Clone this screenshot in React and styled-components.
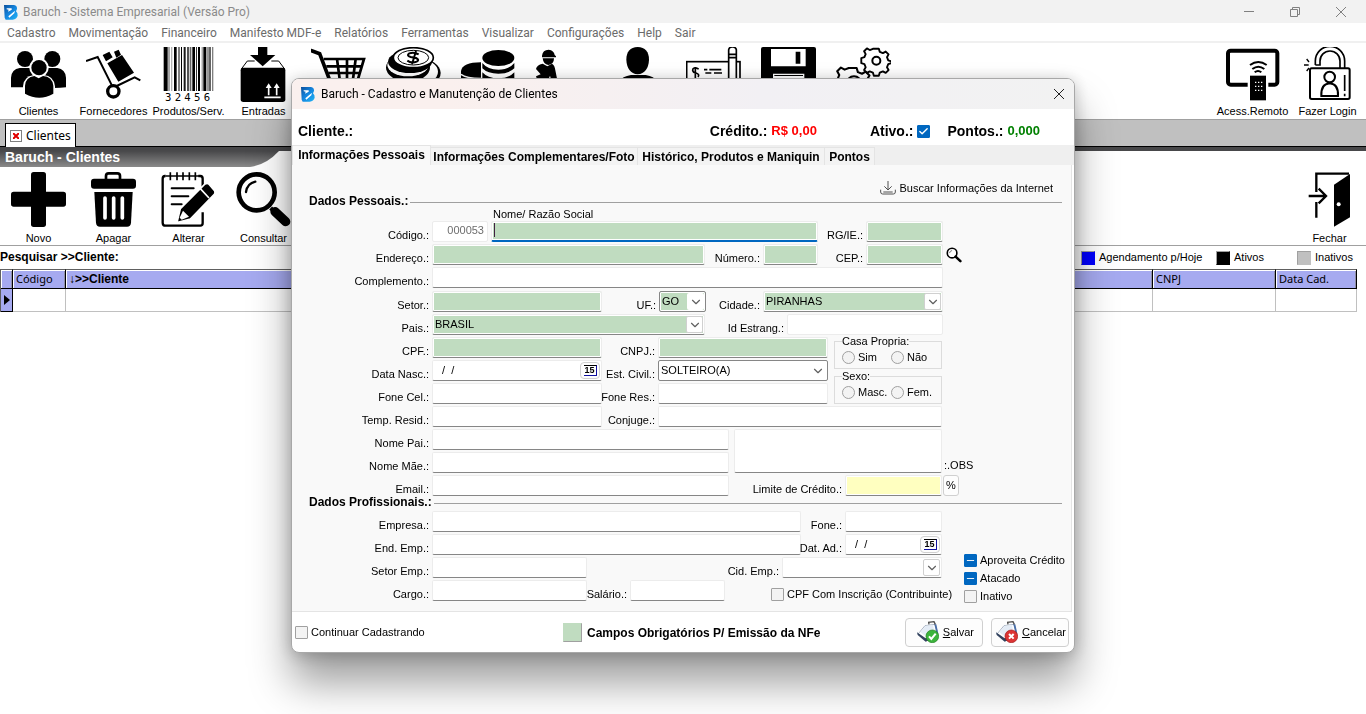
import React from "react";
import styled, { createGlobalStyle } from "styled-components";
import { ChevronDown, Check, Minus } from "lucide-react";

const GlobalStyle = createGlobalStyle`
  * {
    box-sizing: border-box;
  }

  body {
    margin: 0;
    background: #ffffff;
    color: #000000;
    font-family: "Liberation Sans", Arial, sans-serif;
    font-size: 11px;
    line-height: 13px;
    overflow: hidden;
  }

  button, input, select, textarea {
    font: inherit;
    color: inherit;
    margin: 0;
  }

  svg {
    display: block;
    flex: none;
  }
`;

/* ---------- main window ---------- */

const Window = styled.div`
  min-height: 100vh;
  display: flex;
  flex-direction: column;
`;

const TitleBar = styled.header`
  display: flex;
  align-items: center;
  gap: 4px;
  height: 23px;
  padding: 0 2px 0 3px;
  background: #f2f2f2;
  color: #8a8a8a;
  font: 12px/16px Roboto, "Open Sans", sans-serif;
`;

const WindowButtons = styled.div`
  display: flex;
  margin-left: auto;
`;

const WindowButton = styled.button`
  display: grid;
  place-items: center;
  width: ${props => props.$w || 46}px;
  height: 20px;
  padding: 0;
  border: 0;
  background: none;
`;

const MenuBar = styled.nav`
  display: flex;
  align-items: center;
  gap: 13px;
  height: 20px;
  padding: 2px 0 0 7px;
  border-bottom: 2px solid #f0f0f0;
`;

const MenuItem = styled.a`
  color: #6b6b6b;
  text-decoration: none;
  white-space: nowrap;
  font: 12px/16px Roboto, "Open Sans", sans-serif;
`;

const Toolbar = styled.div`
  display: flex;
  height: ${props => props.$h}px;
  padding: 4px 1px 0;
  border-bottom: 1px solid #a0a0a0;
`;

const ToolButton = styled.button`
  display: flex;
  flex-direction: column;
  align-items: center;
  gap: 3px;
  width: ${props => props.$w || 75}px;
  padding: 0;
  border: 0;
  background: none;
  white-space: nowrap;
`;

const PageToolbar = styled(Toolbar)`
  padding-top: 5px;

  ${ToolButton} {
    gap: 5px;
  }
`;

const ToolSpacer = styled.div`
  flex: 1;
`;

const PageTabs = styled.div`
  display: flex;
  align-items: flex-end;
  height: 27px;
  padding-left: 5px;
  background: #c0c0c0;
  border-bottom: 1px solid #000000;
`;

const PageTab = styled.button`
  display: flex;
  align-items: center;
  gap: 4px;
  width: 71px;
  height: 24px;
  margin-bottom: -1px;
  padding: 0 4px;
  border: 1px solid #000000;
  border-bottom: 0;
  background: #ffffff;
  font: 12px/16px "Noto Sans", sans-serif;
`;

const CloseMark = styled.span`
  display: grid;
  place-items: center;
  width: 12px;
  height: 12px;
  border: 1px solid #808080;
`;

const PageHeader = styled.div`
  display: flex;
  height: 20px;
  border-top: 4px solid #48484a;
`;

const PageTitle = styled.h1`
  width: 250px;
  height: 16px;
  margin: 0;
  padding-left: 5px;
  background: linear-gradient(#48484a, #8a8a8a);
  color: #ffffff;
  font-size: 14px;
  line-height: 12px;
`;

const SearchBar = styled.div`
  display: flex;
  align-items: center;
  height: 23px;
`;

const SearchTitle = styled.h2`
  flex: 1;
  margin: 0;
  font-size: 12px;
`;

const StatusKey = styled.span`
  display: flex;
  align-items: center;
  gap: 4px;
  width: ${props => props.$w}px;
  white-space: nowrap;
`;

const Swatch = styled.i`
  flex: none;
  width: ${props => props.$size}px;
  height: ${props => props.$size}px;
  border: 1px solid ${props => props.$color};
  border-${props => props.$sunk ? "right" : "left"}-color: #a0a0a0;
  border-${props => props.$sunk ? "bottom" : "top"}-color: #a0a0a0;
  background: ${props => props.$color};
`;

const Grid = styled.table`
  width: calc(100% - 9px);
  table-layout: fixed;
  border-collapse: separate;
  border-spacing: 0;
  border-left: 1px solid #606060;
`;

const HeadCell = styled.th`
  width: ${props => (props.$w ? `${props.$w}px` : "auto")};
  height: 20px;
  padding: 0 3px;
  border-top: 1px solid #606060;
  border-right: 1px solid #000000;
  border-bottom: 1px solid #000000;
  background: #a6aaf0;
  box-shadow: inset 1px 1px 0 #ffffff, inset -1px 0 0 #9090a8;
  text-align: left;
  font: ${props => (props.$sorted ? "bold 12px/14px" : "11px/14px")}
    ${props => (props.$sorted ? '"Liberation Sans"' : '"Noto Sans"')}, sans-serif;
`;

const Cell = styled.td`
  height: 23px;
  padding: 0 3px;
  border-right: 1px solid #c0c0c0;
  border-bottom: 1px solid #c0c0c0;
`;

const MarkerCell = styled(Cell)`
  background: #a6aaf0;
  border-color: #000000;
`;

/* ---------- dialog ---------- */

const Overlay = styled.div`
  position: fixed;
  inset: 0;
  display: flex;
  justify-content: center;
  align-items: flex-start;
  padding-top: 78px;
`;

const Dialog = styled.section`
  width: 784px;
  border: 1px solid #a8a8a8;
  border-radius: 8px;
  background: #ffffff;
  box-shadow: 0 30px 42px rgba(0, 0, 0, 0.38), 0 2px 16px rgba(0, 0, 0, 0.22);
  overflow: hidden;
`;

const DialogTitle = styled.div`
  display: flex;
  align-items: center;
  gap: 5px;
  height: 30px;
  padding-left: 8px;
  background: linear-gradient(90deg, #faf0ee 20%, #f2f0f4 60%, #f2f2f2);
  font: 12px/16px Roboto, "Open Sans", sans-serif;
`;

const Summary = styled.div`
  display: flex;
  align-items: center;
  height: 36px;
  padding: 8px 34px 0 6px;
  font-size: 14px;
  line-height: 16px;
  font-weight: bold;
`;

const SummaryItem = styled.div`
  display: flex;
  align-items: center;
  gap: 4px;
  margin-left: ${props => props.$gap || 0}px;
`;

const Amount = styled.output`
  color: ${props => props.$color};
  font-size: 13px;
`;

const Tabs = styled.div`
  display: flex;
  align-items: flex-end;
  height: 20px;
  background: #efefef;
`;

const Tab = styled.button`
  width: ${props => props.$w}px;
  height: ${props => (props.$active ? 20 : 18)}px;
  padding: 0 0 ${props => (props.$active ? 2 : 0)}px;
  border: 1px solid #e4e4e4;
  border-bottom: 0;
  border-left-width: ${props => (props.$active ? 1 : 0)}px;
  background: ${props => (props.$active ? "#f9f9f9" : "#f3f3f3")};
  font-size: 12px;
  line-height: 14px;
  font-weight: bold;
  white-space: nowrap;
`;

const Panel = styled.form`
  margin-right: 2px;
  padding: 16px 0 8px;
  background: #f9f9f9;
  border-right: 1px solid #e4e4e4;
  border-bottom: 1px solid #e4e4e4;
`;

const LinkRow = styled.div`
  display: flex;
  justify-content: flex-end;
  height: 14px;
  padding-right: 18px;
`;

const LinkButton = styled.button`
  display: flex;
  align-items: center;
  gap: 4px;
  height: 14px;
  padding: 0;
  border: 0;
  background: none;
`;

const SectionTitle = styled.h3`
  display: flex;
  align-items: center;
  gap: 2px;
  margin: 0;
  padding: 0 9px 0 17px;
  font-size: 12px;
  line-height: 13px;

  &::after {
    content: "";
    flex: 1;
    height: 1px;
    margin-top: 2px;
    background: #a0a0a0;
  }
`;

const Caption = styled.label`
  display: block;
  padding-left: 201px;
`;

const Stack = styled.div`
  display: flex;
  flex-direction: column;
  gap: ${props => props.$gap || 2}px;
`;

const Columns = styled.div`
  display: flex;
`;

const Row = styled.div`
  display: flex;
  align-items: flex-end;
  height: 21px;
`;

const Label = styled.label`
  display: flex;
  justify-content: flex-end;
  flex: none;
  width: ${props => props.$w}px;
  padding-right: 3px;
  white-space: nowrap;
`;

const fills = { green: "#c0dcc0", yellow: "#ffffc0", white: "#ffffff" };

const Input = styled.input`
  flex: none;
  width: ${props => props.$w}px;
  height: 21px;
  padding: 0 3px 3px;
  border: 1px solid #ececec;
  border-bottom-color: ${props => (props.$flat ? "#ececec" : "#868686")};
  border-radius: 2px;
  outline: 0;
  background: ${props => fills[props.$fill || "white"]};
  box-shadow: inset 0 0 0 1px #ffffff;
  text-align: ${props => props.$align || "left"};
  color: ${props => (props.disabled ? "#6d6d6d" : "#000000")};
`;

const ActiveInput = styled(Input)`
  margin-left: 3px;
  border-bottom: 2px solid #0067c0;
  background: linear-gradient(#402040, #402040) 2px 1px / 1px 14px no-repeat #c0dcc0;
`;

const Notes = styled.textarea`
  width: 208px;
  height: 44px;
  margin-left: 5px;
  border: 1px solid #ececec;
  border-bottom-color: #868686;
  border-radius: 2px;
  resize: none;
`;

const NotesLabel = styled.label`
  align-self: flex-end;
  padding: 0 0 1px 2px;
`;

const SelectBox = styled.span`
  display: grid;
  flex: none;
  align-items: center;
  width: ${props => props.$w}px;
  height: 21px;
  border: 1px solid ${props => (props.$framed ? "#868686" : "#ececec")};
  border-bottom-color: #868686;
  border-radius: 2px;
  background: ${props => fills[props.$fill || "white"]};
  box-shadow: inset 0 0 0 1px #ffffff;

  & > * {
    grid-area: 1 / 1;
  }
`;

const Select = styled.select`
  width: 100%;
  height: 19px;
  padding: 0 24px 1px 2px;
  border: 0;
  outline: 0;
  appearance: none;
  background: none;
`;

const Arrow = styled.span`
  display: grid;
  place-items: center;
  justify-self: end;
  width: 17px;
  height: 17px;
  margin-right: 1px;
  border: ${props => (props.$boxed ? "1px solid #d0d0d0" : "0")};
  border-radius: 2px;
  background: #ffffff;
  color: #606060;
  pointer-events: none;
`;

const DateBox = styled.span`
  display: flex;
  align-items: center;
  flex: none;
  width: ${props => props.$w}px;
  height: 21px;
  padding-right: 1px;
  border: 1px solid #ececec;
  border-bottom-color: #868686;
  border-radius: 2px;
  background: #ffffff;
`;

const DateInput = styled.input`
  flex: 1;
  min-width: 0;
  height: 19px;
  padding: 0 0 2px 9px;
  border: 0;
  outline: 0;
  background: none;
  white-space: pre;
`;

const CalendarButton = styled.button`
  display: grid;
  place-items: center;
  width: 20px;
  height: 17px;
  padding: 0;
  border: 1px solid #d0d0d0;
  border-radius: 4px;
  background: #fdfdfd;
`;

const CalendarDay = styled.span`
  width: 13px;
  height: 11px;
  border-top: 1px solid #000000;
  border-right: 1px solid #1010a0;
  border-bottom: 1px solid #1010a0;
  font: bold 9px/9px "Liberation Sans", sans-serif;
`;

const CheckLabel = styled.label`
  display: flex;
  align-items: center;
  flex: none;
  gap: 3px;
  margin-left: ${props => props.$indent || 0}px;
  width: ${props => (props.$w ? `${props.$w}px` : "auto")};
  height: 13px;
  white-space: nowrap;
`;

const CheckBox = styled.span`
  display: inline-grid;
  place-items: center;
  flex: none;
  width: 13px;
  height: 13px;
  color: #ffffff;

  & > * {
    grid-area: 1 / 1;
  }

  svg {
    pointer-events: none;
  }
`;

const Box = styled.input`
  width: 13px;
  height: 13px;
  appearance: none;
  border: 1px solid ${props => (props.$on ? "#0067c0" : "#a0a0a0")};
  border-radius: 1px;
  background: ${props => (props.$on ? "#0067c0" : "#f3f3f3")};
`;

const Radio = styled.input`
  width: 13px;
  height: 13px;
  appearance: none;
  border: 1px solid #a0a0a0;
  border-radius: 50%;
  background: #f3f3f3;
`;

const Options = styled.div`
  display: flex;
  flex-direction: column;
  gap: 1px;
  width: 108px;
  margin: -2px 0 0 6px;
`;

const OptionGroup = styled.fieldset`
  display: flex;
  min-width: 0;
  height: 34px;
  margin: 0;
  padding: 3px 0 0 7px;
  border: 1px solid #dcdcdc;
`;

const Legend = styled.legend`
  padding: 0;
`;

const PercentButton = styled.button`
  width: 16px;
  height: 21px;
  margin-left: 1px;
  padding: 0;
  border: 1px solid #d0d0d0;
  border-radius: 3px;
  background: #fdfdfd;
`;

const LookupButton = styled.button`
  height: 21px;
  margin-left: 3px;
  padding: 0;
  border: 0;
  background: none;
`;

const Flags = styled.div`
  display: flex;
  flex-direction: column;
  gap: 5px;
  margin-left: 21px;
  padding-top: 43px;
`;

const Footer = styled.footer`
  display: flex;
  align-items: center;
  height: 40px;
  padding: 0 5px 0 3px;
`;

const Required = styled.strong`
  margin-left: 5px;
  padding-top: 3px;
  font-size: 12px;
`;

const Actions = styled.div`
  display: flex;
  gap: 8px;
  margin-left: auto;
`;

const ActionButton = styled.button`
  display: flex;
  align-items: center;
  justify-content: flex-end;
  gap: 4px;
  width: 78px;
  height: 29px;
  padding: 0 ${props => props.$pad}px 0 0;
  border: 1px solid #d0d0d0;
  border-radius: 4px;
  background: #fdfdfd;
`;

/* ---------- drawings ---------- */

const Icon = ({ children }) => (
  <svg width="55" height="55" viewBox="0 0 165 165" aria-hidden="true">
    {children}
  </svg>
);

const Line = props => <path fill="none" stroke="#000" {...props} />;

const Logo = () => (
  <svg width="16" height="16" viewBox="0 0 48 48" aria-hidden="true">
    <defs>
      <linearGradient id="logo" x1="0" y1="0" x2="1" y2="1">
        <stop offset="0" stopColor="#0b4f9c" />
        <stop offset="0.5" stopColor="#1487e0" />
        <stop offset="1" stopColor="#22b4f4" />
      </linearGradient>
    </defs>
    <path fill="url(#logo)" d="M3 3h30q10 2 9 12l-3 7q6 5 5 13-3 10-15 12H8L5 41z" />
    <path fill="#fff" d="M11 13h14q4 2 0 5l-10 5 2-6-6-1zM16 37l20-17-2 8-15 13z" />
  </svg>
);

const ClientsIcon = () => (
  <Icon>
    <circle cx="42" cy="36" r="24" />
    <circle cx="124" cy="36" r="24" />
    <path d="M0 121V92q2-26 26-29h30q20 2 26 20v38zM165 121V92q-2-26-26-29h-30q-20 2-26 20v38q50 4 82 0z" />
    <circle cx="84" cy="62" r="29" fill="#fff" />
    <path fill="#fff" d="M36 152v-34q2-30 32-34h30q30 2 34 34v34z" />
    <circle cx="84" cy="62" r="23" />
    <path d="M42 140v-24q2-26 28-29l13 7 13-7q28 2 31 29v24q-42 24-85 0z" />
  </Icon>
);

const SuppliersIcon = () => (
  <Icon>
    <Line d="M0 42l35-12 43 86M92 117l54-26 17 9" strokeWidth="6" />
    <circle cx="82" cy="133" r="17" fill="#fff" stroke="#000" strokeWidth="10" />
    <path d="M64 49l44-25 36 53-47 27zM50 24l20-10 10 17-20 12zM84 14l14-6 7 15-14 9z" />
  </Icon>
);

const bars = [
  [0, 12, 1], [14, 4, 0.5], [22, 4, 0.3], [31, 8, 1], [43, 6, 0.5], [52, 3, 1], [60, 6, 0.9],
  [71, 4, 1], [78, 5, 0.6], [86, 8, 1], [97, 3, 0.8], [103, 6, 1], [114, 3, 0.5], [119, 9, 1],
  [131, 4, 0.6], [137, 4, 0.9], [145, 4, 0.5]
];

const BarcodeIcon = () => (
  <Icon>
    {bars.map(([x, width, opacity]) => (
      <rect key={x} x={x + 8} y="0" width={width} height="132" opacity={opacity} />
    ))}
    <text
      x="12 41 70 99 128"
      y="161"
      fontFamily="DejaVu Sans Mono, monospace"
      fontSize="32"
    >
      32456
    </text>
  </Icon>
);

const InboundIcon = () => (
  <Icon>
    <path d="M66 0h28v24h24L80 58 42 24h24z" />
    <Line d="M16 66l18-24h22M146 66l-18-24h-22" strokeWidth="3" />
    <rect x="14" y="62" width="134" height="103" rx="8" />
    <Line stroke="#fff" strokeWidth="5" d="M98 145v-28M122 145v-28M85 151h49" />
    <path fill="#fff" d="M89 123l9-14 9 14zM113 123l9-14 9 14z" />
  </Icon>
);

const CartIcon = () => (
  <Icon>
    <Line d="M2 11l24 9 34 90" strokeWidth="11" strokeLinecap="round" />
    <Line d="M38 36h121l-18 60M46 58h104M52 78h94M78 36l8 60M108 36v60M134 36l-8 60" strokeWidth="8" />
  </Icon>
);

const CoinsIcon = () => (
  <Icon>
    <ellipse cx="100" cy="78" rx="64" ry="44" />
    <ellipse cx="98" cy="74" rx="58" ry="38" fill="#fff" />
    <ellipse cx="66" cy="62" rx="66" ry="42" />
    <ellipse cx="66" cy="54" rx="62" ry="34" fill="#fff" />
    <ellipse cx="72" cy="44" rx="66" ry="34" />
    <ellipse cx="82" cy="32" rx="60" ry="30" fill="#fff" stroke="#000" strokeWidth="5" />
    <ellipse cx="82" cy="32" rx="46" ry="22" fill="#fff" stroke="#000" strokeWidth="3" />
    <Line d="M98 22q-14-8-28-3-10 7 4 11l16 3q12 6 2 11-16 6-28-3M90 12l-12 40" strokeWidth="6" />
  </Icon>
);

const StackIcon = () => (
  <Icon>
    <path d="M0 96V72q4-26 60-26v50z" />
    <path fill="none" stroke="#fff" strokeWidth="4" d="M0 82q16 12 60 12" />
    <ellipse cx="112" cy="33" rx="48" ry="24" />
    <path d="M64 48q16 20 48 20t48-20v16q-16 16-48 16T64 64zM64 76q16 18 48 18t48-18v24H64z" />
  </Icon>
);

const WorkerIcon = () => (
  <Icon>
    <path d="M18 26q2-18 20-18 16 2 18 16l4 4v3H18zM20 34h34q0 18-17 20-15-2-17-20z" />
    <path d="M0 66q2-12 20-16l14 8 14-8q8 4 10 20l6 30H46l-4-14-6 14H4L0 88l14-6z" />
  </Icon>
);

const PersonIcon = () => (
  <Icon>
    <path d="M80 0q34 2 34 38-2 40-34 44-32-4-34-44Q46 2 80 0z" />
    <path d="M24 104q10-16 36-20h44q26 4 34 20z" />
  </Icon>
);

const CheckIcon = () => (
  <Icon>
    <rect x="2" y="44" width="160" height="70" fill="#fff" stroke="#000" strokeWidth="5" />
    <Line d="M38 66q-18-8-18 4 2 8 10 8 12 4 6 12M28 60v36M54 68h10M70 68h36M58 78h18M84 78h24" strokeWidth="5" />
    <path fill="#fff" stroke="#000" strokeWidth="5" d="M128 98V8q2-8 10-8h4q8 2 9 8v90M128 22h23M128 32h23" />
  </Icon>
);

const FloppyIcon = () => (
  <Icon>
    <path d="M0 6q0-6 6-6h153q6 0 6 6v104H0z" />
    <path fill="#fff" d="M30 6h104v52H30zM36 80h94v20H36z" />
    <path d="M104 14h14v36h-14zM40 84h86v3H40z" />
  </Icon>
);

const gear =
  "M-8-38h16l3 10 10 4 9-5 9 9-5 9 4 10 10 3V8l-10 3-4 10 5 9-9 9-9-5-10 4-3 10H-8l-3-10-10-4-9 5-9-9 5-9-4-10-10-3V-8l10-3 4-10-5-9 9-9 9 5 10-4z";

const GearsIcon = () => (
  <Icon>
    <g fill="none" stroke="#000" strokeWidth="6" strokeLinejoin="round">
      <path transform="translate(121 41) scale(.94)" d={gear} />
      <circle cx="121" cy="41" r="12" />
      <path transform="translate(52 110) scale(1.24)" d={gear} strokeWidth="5" />
      <circle cx="54" cy="110" r="22" />
    </g>
  </Icon>
);

const RemoteIcon = () => (
  <Icon>
    <rect x="9" y="11" width="148" height="102" rx="8" fill="none" stroke="#000" strokeWidth="12" />
    <rect x="68" y="82" width="62" height="83" fill="#fff" />
    <rect x="75" y="86" width="48" height="74" />
    <Line d="M75 54q25-18 50 0M82 66q18-14 36 0M89 76q10-8 20 0" strokeWidth="6" />
    <path
      stroke="#fff"
      strokeWidth="4"
      strokeDasharray="4 8"
      d="M92 104v32M101 104v32M110 104v32"
    />
  </Icon>
);

const LoginIcon = () => (
  <Icon>
    <g fill="none" stroke="#000" strokeWidth="6">
      <rect x="30" y="64" width="119" height="92" rx="5" />
      <path d="M46 54V42a43 43 0 0 1 88 0v22M46 54h14V42a29 29 0 0 1 60 0v22M134 84v48M134 140v8" strokeWidth="5" />
      <circle cx="89" cy="90" r="16" />
      <path d="M64 147q-2-36 25-38 27 2 25 38z" />
      <path d="M12 54h14M20 36l7 9M20 72l7-9" strokeWidth="4" />
    </g>
  </Icon>
);

const PlusIcon = () => (
  <Icon>
    <rect x="0" y="59" width="165" height="45" rx="8" />
    <rect x="60" y="0" width="45" height="165" rx="8" />
  </Icon>
);

const TrashIcon = () => (
  <Icon>
    <Line d="M60 22V12q0-8 8-8h26q8 0 8 8v10" strokeWidth="8" />
    <rect x="15" y="20" width="135" height="30" rx="9" />
    <path d="M25 60h115l-5 92q-1 12-12 12H42q-11 0-12-12z" />
    <path stroke="#fff" strokeWidth="11" strokeLinecap="round" d="M57 78v60M83 78v60M109 78v60" />
  </Icon>
);

const EditIcon = () => (
  <Icon>
    <Line d="M14 12h-2q-7 0-7 8v132q0 9 9 9h104q7 0 7-8v-32M112 12h6q7 0 7 8v24" strokeWidth="7" />
    <Line d="M14 12h100M28 1v24M48 1v24M66 1v24M85 1v24M103 1v24" strokeWidth="5" />
    <Line d="M32 49h66M32 73h50M32 97h30" strokeWidth="6" strokeLinecap="round" />
    <path stroke="#fff" strokeWidth="5" d="M48 152l10-42 74-74q8-4 12 1l16 18q4 6 0 12l-72 74z" />
    <path stroke="#fff" strokeWidth="5" d="M118 50l26 28" />
    <path fill="#fff" d="M66 116l18 18-22 9-6-6z" />
  </Icon>
);

const SearchIcon = () => (
  <Icon>
    <circle cx="62" cy="61" r="54" fill="none" stroke="#000" strokeWidth="14" />
    <Line d="M104 108l10 10" strokeWidth="12" />
    <Line d="M117 119l32 30" strokeWidth="28" strokeLinecap="round" />
    <Line d="M30 60q4-26 28-31" strokeWidth="7" strokeLinecap="round" />
  </Icon>
);

const DoorIcon = () => (
  <Icon>
    <Line d="M43 60V5h98M43 90v47" strokeWidth="7" />
    <path d="M96 38l48-32v130l-48 28z" />
    <circle cx="110" cy="97" r="6" fill="#fff" />
    <Line d="M20 72h50M50 50l22 22-22 22" strokeWidth="7" />
  </Icon>
);

const DownloadIcon = () => (
  <svg width="16" height="14" viewBox="0 0 48 42" fill="none" stroke="#505050" strokeWidth="4" aria-hidden="true">
    <path d="M24 0v26M13 16l11 11 11-11M2 26v7q0 6 6 6h32q6 0 6-6v-7M10 33h28" strokeWidth="3" />
  </svg>
);

const LookupIcon = () => (
  <svg width="16" height="16" viewBox="0 0 50 50" aria-hidden="true">
    <circle cx="19" cy="19" r="15" fill="#fff" stroke="#000" strokeWidth="5" />
    <path d="M30 30l15 14" stroke="#000" strokeWidth="8" strokeLinecap="round" />
    <path d="M11 19q1-7 8-8" fill="none" stroke="#707070" strokeWidth="3" />
  </svg>
);

const DiskIcon = ({ ok }) => (
  <svg width="22" height="22" viewBox="0 0 66 66" aria-hidden="true">
    <path fill="#fff" stroke="#8090a8" strokeWidth="2" d="M24 14l30-4 8 26-38 18L4 38z" />
    <path fill="#33435f" d="M0 34l26 18 36-16v10L26 62 2 42z" />
    <path fill="#4a6ea8" d="M52 10l6 0 6 28-5 2z" />
    <path fill="#e4ecf6" d="M10 34l16-20 22-2 4 20-26 14z" />
    <path fill="none" stroke="#505050" strokeWidth="4" d="M36 10l-1-6 16-2 4 8" />
    <circle cx="46" cy="46" r="19" fill={ok ? "#3cb43c" : "#dc3434"} stroke={ok ? "#1f7f1f" : "#a01818"} strokeWidth="2" />
    <path
      fill="none"
      stroke="#fff"
      strokeWidth="6"
      d={ok ? "M36 46l7 8 13-16" : "M39 39l14 14M53 39L39 53"}
    />
  </svg>
);

const CrossIcon = ({ size, color }) => (
  <svg width={size} height={size} viewBox="0 0 10 10" aria-hidden="true">
    <path d="M0 0l10 10M10 0L0 10" stroke={color} strokeWidth="1" />
  </svg>
);

const CurveEdge = () => (
  <svg width="31" height="16" viewBox="0 0 31 16" aria-hidden="true">
    <defs>
      <linearGradient id="edge" x1="0" y1="0" x2="0" y2="1">
        <stop offset="0" stopColor="#48484a" />
        <stop offset="1" stopColor="#8a8a8a" />
      </linearGradient>
    </defs>
    <path fill="url(#edge)" d="M0 0h29Q16 14 0 16z" />
  </svg>
);

/* ---------- form parts ---------- */

const Field = ({ id, label, labelWidth = 140, width, ...rest }) => (
  <>
    <Label htmlFor={id} $w={labelWidth}>{label}</Label>
    <Input id={id} $w={width} {...rest} />
  </>
);

const SelectField = ({ id, label, labelWidth = 140, width, value, fill, framed }) => (
  <>
    <Label htmlFor={id} $w={labelWidth}>{label}</Label>
    <SelectBox $w={width} $fill={fill} $framed={framed}>
      <Select id={id} defaultValue={value}>
        <option>{value}</option>
      </Select>
      <Arrow $boxed={!framed}>
        <ChevronDown size={14} strokeWidth={2} />
      </Arrow>
    </SelectBox>
  </>
);

const DateField = ({ id, label, labelWidth = 140, width }) => (
  <>
    <Label htmlFor={id} $w={labelWidth}>{label}</Label>
    <DateBox $w={width}>
      <DateInput id={id} defaultValue="/  /" />
      <CalendarButton type="button">
        <CalendarDay>15</CalendarDay>
      </CalendarButton>
    </DateBox>
  </>
);

const CheckField = ({ label, state, ...rest }) => (
  <CheckLabel {...rest}>
    <CheckBox>
      <Box type="checkbox" defaultChecked={!!state} $on={!!state} />
      {state === "mixed" && <Minus size={11} strokeWidth={2} />}
    </CheckBox>
    {label}
  </CheckLabel>
);

const RadioField = ({ name, label, width }) => (
  <CheckLabel $w={width}>
    <Radio type="radio" name={name} />
    {label}
  </CheckLabel>
);

const Tool = ({ icon: Drawing, label, name, width }) => (
  <ToolButton type="button" aria-label={label || name} $w={width}>
    <Drawing />
    {label}
  </ToolButton>
);

const menus = [
  "Cadastro", "Movimentação", "Financeiro", "Manifesto MDF-e", "Relatórios",
  "Ferramentas", "Visualizar", "Configurações", "Help", "Sair"
];

const MainWindow = () => (
  <Window>
    <TitleBar>
      <Logo />
      Baruch - Sistema Empresarial (Versão Pro)
      <WindowButtons>
        <WindowButton aria-label="Minimizar">
          <svg width="10" height="10" viewBox="0 0 10 10"><path d="M0 4.500h10" stroke="#808080" /></svg>
        </WindowButton>
        <WindowButton aria-label="Restaurar">
          <svg width="10" height="10" viewBox="0 0 10 10" fill="none" stroke="#808080">
            <path d="M.5 2.500h7v7h-7zM2.500 2V.5h7v7H8" />
          </svg>
        </WindowButton>
        <WindowButton aria-label="Fechar janela">
          <CrossIcon size={10} color="#808080" />
        </WindowButton>
      </WindowButtons>
    </TitleBar>
    <MenuBar>
      {menus.map(item => (
        <MenuItem key={item} href="#">{item}</MenuItem>
      ))}
    </MenuBar>
    <Toolbar $h={77}>
      <Tool icon={ClientsIcon} label="Clientes" />
      <Tool icon={SuppliersIcon} label="Fornecedores" />
      <Tool icon={BarcodeIcon} label="Produtos/Serv." />
      <Tool icon={InboundIcon} label="Entradas" />
      <Tool icon={CartIcon} name="Vendas" />
      <Tool icon={CoinsIcon} name="Receber" />
      <Tool icon={StackIcon} name="Pagar" />
      <Tool icon={WorkerIcon} name="Serviços" />
      <Tool icon={PersonIcon} name="Funcionários" />
      <Tool icon={CheckIcon} name="Cheques" />
      <Tool icon={FloppyIcon} name="Backup" />
      <Tool icon={GearsIcon} name="Configurar" />
      <ToolSpacer />
      <Tool icon={RemoteIcon} label="Acess.Remoto" />
      <Tool icon={LoginIcon} label="Fazer Login" />
    </Toolbar>
    <PageTabs>
      <PageTab type="button">
        <CloseMark>
          <svg width="6" height="6" viewBox="0 0 6 6">
            <path d="M0 0l6 6M6 0L0 6" stroke="#e00000" strokeWidth="2" />
          </svg>
        </CloseMark>
        Clientes
      </PageTab>
    </PageTabs>
    <PageHeader>
      <PageTitle>Baruch - Clientes</PageTitle>
      <CurveEdge />
    </PageHeader>
    <PageToolbar $h={79}>
      <Tool icon={PlusIcon} label="Novo" />
      <Tool icon={TrashIcon} label="Apagar" />
      <Tool icon={EditIcon} label="Alterar" />
      <Tool icon={SearchIcon} label="Consultar" />
      <ToolSpacer />
      <Tool icon={DoorIcon} label="Fechar" width={71} />
    </PageToolbar>
    <SearchBar>
      <SearchTitle>Pesquisar &gt;&gt;Cliente:</SearchTitle>
      <StatusKey $w={135}><Swatch $size={14} $color="#0000ff" />Agendamento p/Hoje</StatusKey>
      <StatusKey $w={81}><Swatch $size={14} $color="#000000" />Ativos</StatusKey>
      <StatusKey $w={69}><Swatch $size={14} $color="#c0c0c0" />Inativos</StatusKey>
    </SearchBar>
    <Grid>
      <thead>
        <tr>
          <HeadCell $w={12} />
          <HeadCell $w={53}>Código</HeadCell>
          <HeadCell $sorted>↓&gt;&gt;Cliente</HeadCell>
          <HeadCell $w={123}>CNPJ</HeadCell>
          <HeadCell $w={81}>Data Cad.</HeadCell>
        </tr>
      </thead>
      <tbody>
        <tr>
          <MarkerCell>
            <svg width="6" height="10" viewBox="0 0 6 10"><path d="M0 0l6 5-6 5z" /></svg>
          </MarkerCell>
          <Cell />
          <Cell />
          <Cell />
          <Cell />
        </tr>
      </tbody>
    </Grid>
  </Window>
);

const PersonalData = () => (
  <>
    <SectionTitle>Dados Pessoais.:</SectionTitle>
    <Caption htmlFor="nome">Nome/ Razão Social</Caption>
    <Stack $gap={3}>
      <Stack>
        <Row>
          <Field id="codigo" label="Código.:" width={56} defaultValue="000053" $align="right" $flat disabled />
          <ActiveInput id="nome" $w={327} />
          <Field id="rg" label="RG/IE.:" labelWidth={48} width={77} $fill="green" />
        </Row>
        <Row>
          <Field id="endereco" label="Endereço.:" width={273} $fill="green" />
          <Field id="numero" label="Número.:" labelWidth={58} width={55} $fill="green" />
          <Field id="cep" label="CEP.:" labelWidth={48} width={77} $fill="green" />
          <LookupButton type="button" aria-label="Buscar CEP"><LookupIcon /></LookupButton>
        </Row>
        <Row>
          <Field id="complemento" label="Complemento.:" width={511} />
        </Row>
      </Stack>
      <Stack>
        <Row>
          <Field id="setor" label="Setor.:" width={170} $fill="green" />
          <SelectField id="uf" label="UF.:" labelWidth={57} width={47} value="GO" fill="green" framed />
          <SelectField id="cidade" label="Cidade.:" labelWidth={57} width={180} value="PIRANHAS" fill="green" />
        </Row>
        <Row>
          <SelectField id="pais" label="Pais.:" width={273} value="BRASIL" fill="green" />
          <Field id="estrang" label="Id Estrang.:" labelWidth={82} width={156} $flat />
        </Row>
        <Columns>
          <Stack>
            <Row>
              <Field id="cpf" label="CPF.:" width={170} $fill="green" />
              <Field id="cnpj" label="CNPJ.:" labelWidth={56} width={170} $fill="green" />
            </Row>
            <Row>
              <DateField id="nasc" label="Data Nasc.:" width={170} />
              <SelectField id="civil" label="Est. Civil.:" labelWidth={56} width={170} value="SOLTEIRO(A)" framed />
            </Row>
            <Row>
              <Field id="celular" label="Fone Cel.:" width={170} />
              <Field id="residencial" label="Fone Res.:" labelWidth={56} width={170} />
            </Row>
          </Stack>
          <Options>
            <OptionGroup>
              <Legend>Casa Propria:</Legend>
              <RadioField name="casa" label="Sim" width={49} />
              <RadioField name="casa" label="Não" />
            </OptionGroup>
            <OptionGroup>
              <Legend>Sexo:</Legend>
              <RadioField name="sexo" label="Masc." width={49} />
              <RadioField name="sexo" label="Fem." />
            </OptionGroup>
          </Options>
        </Columns>
        <Row>
          <Field id="tempo" label="Temp. Resid.:" width={170} />
          <Field id="conjuge" label="Conjuge.:" labelWidth={56} width={284} />
        </Row>
        <Columns>
          <Stack>
            <Row>
              <Field id="pai" label="Nome Pai.:" width={297} />
            </Row>
            <Row>
              <Field id="mae" label="Nome Mãe.:" width={297} />
            </Row>
          </Stack>
          <Notes id="obs" />
          <NotesLabel htmlFor="obs">:.OBS</NotesLabel>
        </Columns>
        <Row>
          <Field id="email" label="Email.:" width={297} />
          <Field id="limite" label="Limite de Crédito.:" labelWidth={116} width={97} $fill="yellow" />
          <PercentButton type="button">%</PercentButton>
        </Row>
      </Stack>
    </Stack>
  </>
);

const WorkData = () => (
  <Stack>
    <SectionTitle>Dados Profissionais.:</SectionTitle>
    <Columns>
      <Stack>
        <Row>
          <Field id="empresa" label="Empresa.:" width={369} />
          <Field id="fone" label="Fone.:" labelWidth={44} width={97} />
        </Row>
        <Row>
          <Field id="endEmp" label="End. Emp.:" width={369} />
          <DateField id="admissao" label="Dat. Ad.:" labelWidth={44} width={97} />
        </Row>
        <Row>
          <Field id="setorEmp" label="Setor Emp.:" width={155} />
          <SelectField id="cidEmp" label="Cid. Emp.:" labelWidth={195} width={160} value="" />
        </Row>
        <Row>
          <Field id="cargo" label="Cargo.:" width={155} />
          <Field id="salario" label="Salário.:" labelWidth={43} width={95} />
          <CheckField label="CPF Com Inscrição (Contribuinte)" $indent={46} $w={172} />
        </Row>
      </Stack>
      <Flags>
        <CheckField label="Aproveita Crédito" state="mixed" />
        <CheckField label="Atacado" state="mixed" />
        <CheckField label="Inativo" />
      </Flags>
    </Columns>
  </Stack>
);

const ClientDialog = () => (
  <Overlay>
    <Dialog role="dialog">
      <DialogTitle>
        <Logo />
        Baruch - Cadastro e Manutenção de Clientes
        <WindowButtons>
          <WindowButton $w={30} aria-label="Fechar cadastro">
            <CrossIcon size={10} color="#202020" />
          </WindowButton>
        </WindowButtons>
      </DialogTitle>
      <Summary>
        Cliente.:
        <ToolSpacer />
        <SummaryItem>
          Crédito.: <Amount $color="#ff0000">R$ 0,00</Amount>
        </SummaryItem>
        <SummaryItem $gap={53}>
          <label htmlFor="ativo">Ativo.:</label>
          <CheckBox>
            <Box id="ativo" type="checkbox" defaultChecked $on />
            <Check size={11} strokeWidth={3} />
          </CheckBox>
        </SummaryItem>
        <SummaryItem $gap={17}>
          Pontos.: <Amount $color="#008000">0,000</Amount>
        </SummaryItem>
      </Summary>
      <Tabs>
        <Tab $active $w={139}>Informações Pessoais</Tab>
        <Tab $w={207}>Informações Complementares/Foto</Tab>
        <Tab $w={187}>Histórico, Produtos e Maniquin</Tab>
        <Tab $w={50}>Pontos</Tab>
      </Tabs>
      <Panel>
        <LinkRow>
          <LinkButton type="button">
            <DownloadIcon />
            Buscar Informações da Internet
          </LinkButton>
        </LinkRow>
        <PersonalData />
        <WorkData />
      </Panel>
      <Footer>
        <CheckField label="Continuar Cadastrando" $w={268} />
        <Swatch $size={19} $color="#c0dcc0" $sunk />
        <Required>Campos Obrigatórios P/ Emissão da NFe</Required>
        <Actions>
          <ActionButton type="button" $pad={8}>
            <DiskIcon ok />
            <span><u>S</u>alvar</span>
          </ActionButton>
          <ActionButton type="button" $pad={2}>
            <DiskIcon />
            <span><u>C</u>ancelar</span>
          </ActionButton>
        </Actions>
      </Footer>
    </Dialog>
  </Overlay>
);

const App = () => (
  <>
    <GlobalStyle />
    <MainWindow />
    <ClientDialog />
  </>
);

export default App;
